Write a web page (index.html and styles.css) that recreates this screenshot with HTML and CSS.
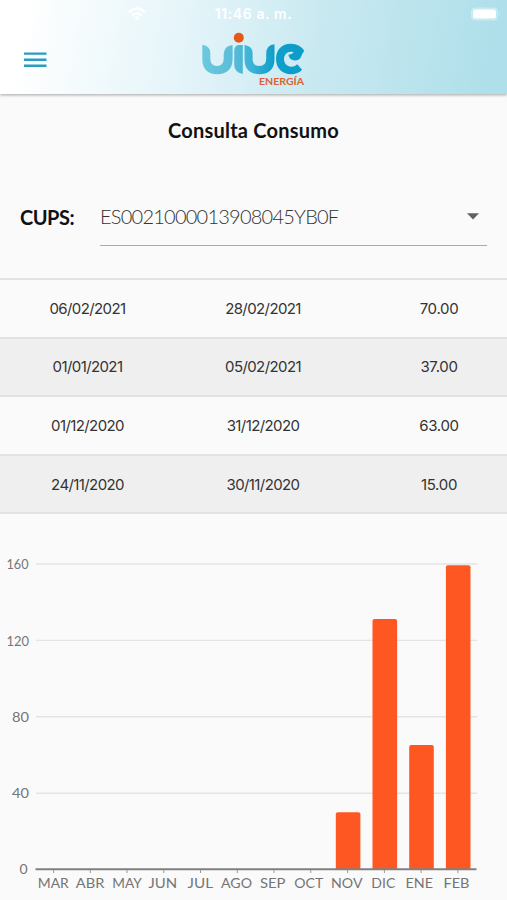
FILE: index.html
```html
<!DOCTYPE html>
<html lang="es">
  <head>
    <meta charset="UTF-8" />
    <meta name="viewport" content="width=device-width, initial-scale=1.0" />
    <title>Consulta Consumo</title>
    <link rel="stylesheet" href="styles.css">
  </head>
  <body>
    <header class="header">
      <div class="statusBar">
        <div class="signal">
          <svg width="18" height="14" viewBox="0 0 18 14" fill="none" stroke="#fff" stroke-width="2.6">
            <path d="M1 5Q9-2 17 5M4 8.5Q9 4 14 8.5" />
            <path d="M6.5 10.5Q9 8.5 11.5 10.5L9 13.5Z" fill="#fff" stroke="none" />
          </svg>
        </div>
        <div class="clock">11:46 a. m.</div>
        <div class="battery">
          <svg width="30" height="14" viewBox="0 0 30 14">
            <rect x="0.5" y="1" width="26" height="12" rx="3.5" fill="#fff" fill-opacity="0.2" stroke="#fff" stroke-opacity="0.35" />
            <rect x="2" y="2.5" width="23" height="9" rx="2" fill="#fff" />
            <path d="M28 5v4q1.5-2 0-4" fill="#fff" fill-opacity="0.4" />
          </svg>
        </div>
      </div>
      <div class="toolbar">
        <button class="menuButton" aria-label="Menú">
          <svg width="24" height="18" viewBox="0 0 24 18" stroke="#2a9cc0" stroke-width="2.4">
            <path d="M1 2.6h22.5M1 8.7h22.5M1 14.8h22.5" />
          </svg>
        </button>
        <svg class="logo" width="106" height="58" viewBox="201 31 106 58">
          <defs>
            <linearGradient id="wave" gradientUnits="userSpaceOnUse" x1="202" y1="0" x2="304" y2="0">
              <stop offset="0" stop-color="#6cc9de" />
              <stop offset="0.3" stop-color="#5bbdd8" />
              <stop offset="0.5" stop-color="#38b2d5" />
              <stop offset="0.7" stop-color="#109fca" />
              <stop offset="1" stop-color="#0c9cca" />
            </linearGradient>
          </defs>
          <g fill="url(#wave)">
            <path d="M202.3 44.7Q210.3 46 210.3 53V59Q210.5 66 216.9 66Q223.5 66 223.7 59V54Q224 46 232.6 45V59Q232.3 74.2 217 74.2Q202.5 74 202.3 59Z" />
            <path d="M234.2 50Q234.5 46 238 45H242.8V74Q234.2 72 234.2 65Z" />
            <path d="M244.5 45Q252.6 46 252.6 53V59Q252.6 65.9 259.3 66Q266 66 266.2 59V53Q266.5 45 274.5 44.2V59Q274.3 74.2 259.3 74.2Q244.5 74 244.5 59Z" />
            <path d="M304.3 50.8Q299.5 43.5 290.5 43.7C281 43.8 276 50.5 276 59C276 68 282 74.2 291 74.2Q298.2 74.2 302.1 69.8L297.2 64.2Q295 66.7 291.3 66.7C287 66.5 284 63.3 284 59C284 54.8 287 51.8 290.8 51.7Q293 51.5 293.6 52.4Q292 54 288.4 54.8Q289.3 60.4 295 60.6Q298.9 60.4 300.9 57.2Q302 53.8 304.3 50.8Z" />
          </g>
          <circle cx="238.8" cy="37.8" r="5" fill="#e65817" />
          <text class="logoText" x="259" y="85" textLength="45" lengthAdjust="spacingAndGlyphs">ENERGÍA</text>
        </svg>
      </div>
    </header>

    <main>
      <h1 class="title">Consulta Consumo</h1>

      <div class="cups">
        <div class="cupsLabel">CUPS:</div>
        <div class="select">
          <div class="selectValue">ES0021000013908045YB0F</div>
          <svg width="12" height="7" viewBox="0 0 12 7"><path d="M0 0.3h12L6 6.5z" fill="#616161" /></svg>
        </div>
      </div>

      <div class="table">
        <div class="row">
          <div class="date">06/02/2021</div>
          <div class="date">28/02/2021</div>
          <div class="amount">70.00</div>
        </div>
        <div class="row">
          <div class="date">01/01/2021</div>
          <div class="date">05/02/2021</div>
          <div class="amount">37.00</div>
        </div>
        <div class="row">
          <div class="date">01/12/2020</div>
          <div class="date">31/12/2020</div>
          <div class="amount">63.00</div>
        </div>
        <div class="row">
          <div class="date">24/11/2020</div>
          <div class="date">30/11/2020</div>
          <div class="amount">15.00</div>
        </div>
      </div>

      <svg class="chart" width="507" height="360" viewBox="0 540 507 360">
        <path class="gridLine" d="M36 564h441M36 640.4h441M36 716.8h441M36 793.2h441" />
        <g class="bars">
          <path d="M335.8 869.5V814.2q0-2 2-2h20.6q2 0 2 2V869.5z" />
          <path d="M372.5 869.5V621q0-2 2-2h20.6q2 0 2 2V869.5z" />
          <path d="M409.2 869.5V747q0-2 2-2h20.6q2 0 2 2V869.5z" />
          <path d="M445.9 869.5V567.3q0-2 2-2h20.6q2 0 2 2V869.5z" />
        </g>
        <path class="axis" d="M35.5 869.3H476.5" />
        <path class="ticks" d="M53.6 870v3M90.3 870v3M127 870v3M163.8 870v3M200.5 870v3M237.3 870v3M274 870v3M310.8 870v3M347.6 870v3M384.4 870v3M421.1 870v3M457.9 870v3" />
        <g class="labels">
          <text x="6.5" y="569" textLength="22" lengthAdjust="spacingAndGlyphs">160</text>
          <text x="6.5" y="645.6" textLength="22.5" lengthAdjust="spacingAndGlyphs">120</text>
          <text x="12" y="721.6" textLength="17" lengthAdjust="spacingAndGlyphs">80</text>
          <text x="12" y="798.4" textLength="17" lengthAdjust="spacingAndGlyphs">40</text>
          <text x="19.5" y="874.4">0</text>
          <text x="37.8" y="888" textLength="31" lengthAdjust="spacingAndGlyphs">MAR</text>
          <text x="75.8" y="888" textLength="28.5" lengthAdjust="spacingAndGlyphs">ABR</text>
          <text x="112.3" y="888" textLength="29.5" lengthAdjust="spacingAndGlyphs">MAY</text>
          <text x="148.5" y="888" textLength="28.7" lengthAdjust="spacingAndGlyphs">JUN</text>
          <text x="187.5" y="888" textLength="25.5" lengthAdjust="spacingAndGlyphs">JUL</text>
          <text x="221" y="888" textLength="31" lengthAdjust="spacingAndGlyphs">AGO</text>
          <text x="260" y="888" textLength="25.5" lengthAdjust="spacingAndGlyphs">SEP</text>
          <text x="294.3" y="888" textLength="29" lengthAdjust="spacingAndGlyphs">OCT</text>
          <text x="331" y="888" textLength="31.5" lengthAdjust="spacingAndGlyphs">NOV</text>
          <text x="371.3" y="888" textLength="24" lengthAdjust="spacingAndGlyphs">DIC</text>
          <text x="405.5" y="888" textLength="27.5" lengthAdjust="spacingAndGlyphs">ENE</text>
          <text x="443.5" y="888" textLength="26" lengthAdjust="spacingAndGlyphs">FEB</text>
        </g>
      </svg>
    </main>
  </body>
</html>
```

FILE: styles.css
```css
body {
  margin: 0;
  height: 900px;
  overflow: hidden;
  background-color: #fafafa;
  color: #111;
  font-family: Lato, sans-serif;
}

svg {
  display: block;
}

.header {
  height: 94px;
  background: linear-gradient(100deg, #fff 5%, #e3f4f9 38%, #c9e9f1 62%, #aedfea 97%);
  box-shadow: 0 1px 3px rgba(0, 0, 0, 0.35);
}

.statusBar {
  display: grid;
  grid-template-columns: 1fr 1fr 1fr;
  align-items: center;
  height: 27px;
  color: #fff;
}

.signal {
  padding-left: 128px;
}

.clock {
  font-family: Inter, sans-serif;
  font-size: 14px;
  font-weight: 600;
  letter-spacing: 0.6px;
  text-align: center;
}

.battery {
  display: flex;
  justify-content: flex-end;
  padding-right: 6px;
}

.toolbar {
  display: grid;
  grid-template-columns: 1fr 106px 1fr;
  align-items: center;
  height: 65px;
}

.menuButton {
  justify-self: start;
  margin: 0 0 0 23px;
  padding: 0;
  border: none;
  background: none;
}

.logoText {
  fill: #dc6134;
  font-size: 9.3px;
  font-weight: 700;
}

.title {
  margin: 0;
  padding-top: 24px;
  font-size: 20px;
  font-weight: 700;
  line-height: 24px;
  letter-spacing: 0.22px;
  text-align: center;
}

.cups {
  display: flex;
  align-items: center;
  padding: 45px 20px 32px;
}

.cupsLabel {
  width: 80px;
  font-size: 20px;
  font-weight: 700;
  letter-spacing: -0.5px;
}

.select {
  display: flex;
  flex: 1;
  align-items: center;
  justify-content: space-between;
  height: 58px;
  padding-right: 8px;
  border-bottom: 1px solid #aaa;
}

.selectValue {
  color: #333;
  font-size: 20px;
  font-weight: 300;
  line-height: 30px;
  letter-spacing: -0.77px;
}

.row {
  display: grid;
  grid-template-columns: 175px 176px 1fr;
  align-items: center;
  box-sizing: border-box;
  height: 58.6px;
  border-top: 2px solid #e2e2e2;
  color: #333;
  font-family: Inter, sans-serif;
  font-size: 15px;
  text-align: center;
}

.date {
  letter-spacing: -0.6px;
}

.amount {
  padding-left: 20px;
  letter-spacing: -0.3px;
}

.row:nth-child(even) {
  background-color: #efefef;
}

.row:last-child {
  height: 60.6px;
  border-bottom: 2px solid #e2e2e2;
}

.chart {
  margin-top: 26px;
}

.gridLine {
  stroke: #e4e4e4;
  stroke-width: 1.4;
}

.bars {
  fill: #ff5722;
}

.axis {
  stroke: #808080;
  stroke-width: 2;
}

.ticks {
  stroke: #999;
  stroke-width: 1;
}

.labels {
  fill: #757575;
  font-size: 14px;
}
```
